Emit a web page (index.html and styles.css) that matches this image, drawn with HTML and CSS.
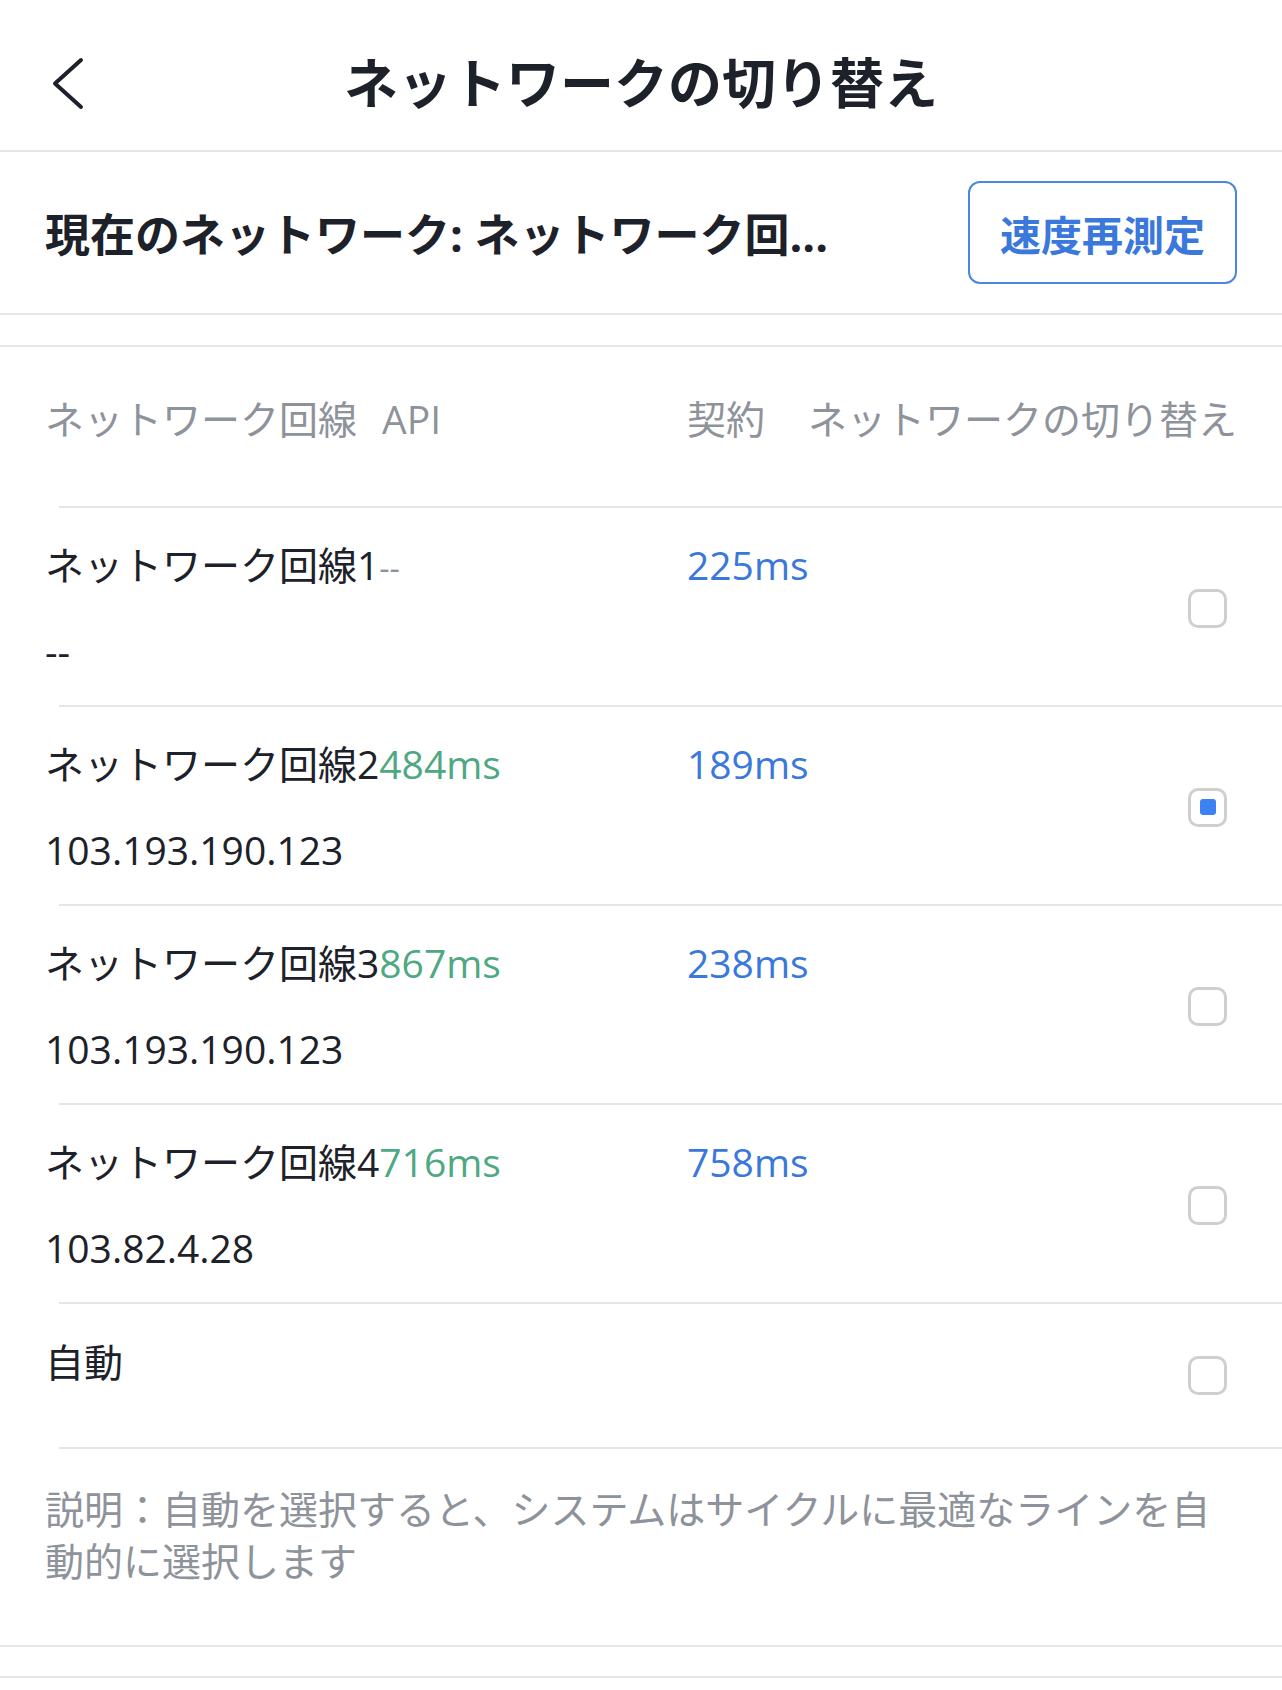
FILE: index.html
```html
<!DOCTYPE html>
<html lang="ja">
<head>
<meta charset="utf-8">
<title>ネットワークの切り替え</title>
<link rel="stylesheet" href="styles.css">
</head>
<body>
<header class="topbar">
  <button class="back" aria-label="戻る">
    <svg width="40" height="56" viewBox="0 0 40 56"><path d="M31 5 L5 28.5 L31 52" fill="none" stroke="#1d2129" stroke-width="4" stroke-linecap="round" stroke-linejoin="round"/></svg>
  </button>
  <h1 class="title">ネットワークの切り替え</h1>
  <span class="topbar-end"></span>
</header>

<section class="current">
  <div class="current-text">現在のネットワーク: ネットワーク回...</div>
  <button class="btn-retest">速度再測定</button>
</section>

<div class="gap"></div>

<section class="table">
  <div class="table-head">
    <div>ネットワーク回線<span class="api">API</span></div>
    <div>契約</div>
    <div class="head-end">ネットワークの切り替え</div>
  </div>

  <div class="row">
    <div class="name">ネットワーク回線1<span class="dash">--</span></div>
    <div class="ip">--</div>
    <div class="ms">225ms</div>
    <div class="check"></div>
  </div>

  <div class="row">
    <div class="name">ネットワーク回線2<span class="api-ms">484ms</span></div>
    <div class="ip">103.193.190.123</div>
    <div class="ms">189ms</div>
    <div class="check on"></div>
  </div>

  <div class="row">
    <div class="name">ネットワーク回線3<span class="api-ms">867ms</span></div>
    <div class="ip">103.193.190.123</div>
    <div class="ms">238ms</div>
    <div class="check"></div>
  </div>

  <div class="row">
    <div class="name">ネットワーク回線4<span class="api-ms">716ms</span></div>
    <div class="ip">103.82.4.28</div>
    <div class="ms">758ms</div>
    <div class="check"></div>
  </div>

  <div class="row auto">
    <div class="name">自動</div>
    <div class="check"></div>
  </div>

  <p class="note">説明：自動を選択すると、システムはサイクルに最適なラインを自動的に選択します</p>
</section>

<div class="tail"></div>
</body>
</html>
```

FILE: styles.css
```css
* {
  box-sizing: border-box;
  margin: 0;
  padding: 0;
}

body {
  margin: 0;
  width: 1282px;
  background: #ffffff;
  color: #1d2129;
  font-family: "Open Sans", "Noto Sans CJK JP", sans-serif;
}

.topbar {
  display: grid;
  grid-template-columns: 1fr auto 1fr;
  align-items: center;
  height: 152px;
  padding-top: 16px;
  border-bottom: 2px solid #e5e5e5;
}

.back {
  justify-self: start;
  margin-left: 50px;
  display: flex;
  border: 0;
  background: none;
}

.title {
  font-size: 54px;
  font-weight: 700;
  line-height: 1.2;
  color: #1d2129;
}

.current {
  display: flex;
  align-items: center;
  height: 163px;
  padding: 0 45px;
  border-bottom: 2px solid #e5e5e5;
}

.current-text {
  flex: 1;
  min-width: 0;
  margin-right: 40px;
  font-size: 45px;
  font-weight: 700;
  white-space: nowrap;
}

.btn-retest {
  width: 269px;
  height: 103px;
  border: 2px solid #4a86e3;
  border-radius: 12px;
  background: #ffffff;
  color: #3a78dc;
  font-family: inherit;
  font-size: 41px;
  font-weight: 700;
}

.gap {
  height: 30px;
}

.table {
  border-top: 2px solid #e5e5e5;
  font-size: 39px;
  line-height: 60px;
}

.table-head {
  display: grid;
  grid-template-columns: 642px 1fr auto;
  padding: 42px 45px 57px;
  color: #8e939b;
}

.api {
  margin-left: 25px;
}

.row {
  display: grid;
  grid-template-columns: 642px 1fr auto;
  grid-template-rows: 60px 60px;
  row-gap: 26px;
  padding: 29px 45px 24px;
  background: linear-gradient(#e5e5e5, #e5e5e5) no-repeat 59px 0 / calc(100% - 59px) 2px;
}

.name {
  grid-column: 1;
  grid-row: 1;
  white-space: nowrap;
}

.ip {
  grid-column: 1;
  grid-row: 2;
}

.ms {
  grid-column: 2;
  grid-row: 1;
  color: #3a78dc;
}

.dash {
  color: #8e939b;
  font-size: 32px;
}

.api-ms {
  color: #4ea882;
}

.check {
  grid-column: 3;
  grid-row: 1 / 3;
  align-self: center;
  width: 39px;
  height: 39px;
  margin-right: 10px;
  border: 3.5px solid #cfcfcf;
  border-radius: 10px;
  display: flex;
  align-items: center;
  justify-content: center;
}

.check.on::after {
  content: "";
  width: 16px;
  height: 16px;
  border-radius: 3px;
  background: #3d82f0;
}

.row.auto {
  grid-template-rows: 86px;
  padding: 30px 45px 29px;
}

.row.auto .name {
  align-self: start;
}

.row.auto .check {
  grid-row: 1;
}

.note {
  padding: 36px 45px 58px;
  font-size: 39px;
  line-height: 52px;
  color: #8e939b;
  border-bottom: 2px solid #e5e5e5;
  background: linear-gradient(#e5e5e5, #e5e5e5) no-repeat 59px 0 / calc(100% - 59px) 2px;
}

.tail {
  margin-top: 29px;
  height: 40px;
  border-top: 2px solid #e5e5e5;
}
```
